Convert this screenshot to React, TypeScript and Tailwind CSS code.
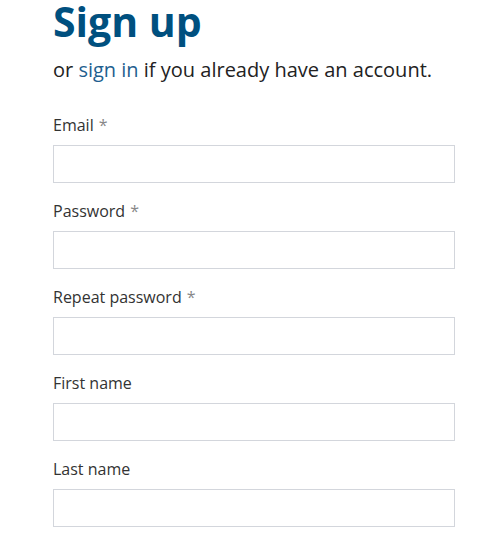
const fields = [
  { label: 'Email', required: true, type: 'email' },
  { label: 'Password', required: true, type: 'password' },
  { label: 'Repeat password', required: true, type: 'password' },
  { label: 'First name', required: false, type: 'text' },
  { label: 'Last name', required: false, type: 'text' },
];

export default function App() {
  return (
    <div className="min-h-screen bg-white px-[53px] font-['Open_Sans',sans-serif] text-[#222]">
      <h1 className="text-[41px] leading-[42px] font-bold text-[#00507f]">Sign up</h1>
      <p className="mt-[14px] text-[20px] leading-[28px]">
        or <a href="#" className="text-[#1f5f8f]">sign in</a> if you already have an account.
      </p>
      <form className="mt-[29px] w-[402px]">
        {fields.map(f => (
          <div key={f.label} className="mb-[16px]">
            <label className="block text-[16px] leading-[24px] text-[#333]">
              {f.label}
              {f.required && <span className="ml-[5px] text-[#888]">*</span>}
            </label>
            <input
              type={f.type}
              className="mt-[8px] block h-[38px] w-full border border-[#d3d6dc] bg-white px-3 outline-none"
            />
          </div>
        ))}
      </form>
    </div>
  );
}
